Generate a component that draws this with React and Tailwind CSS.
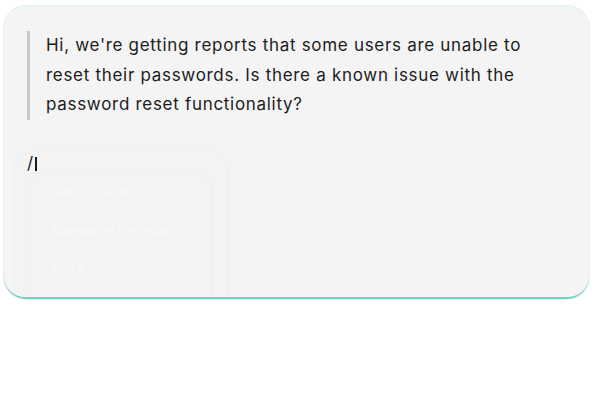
export default function App() {
  return (
    <div className="h-[411px] w-[600px] bg-white pl-[4px] pt-[6px]" style={{ fontFamily: 'Inter, "Noto Sans", sans-serif' }}>
      <section className="relative h-[293px] w-[585px] overflow-hidden rounded-[22px] border-b-2 border-[#7ccdc8] bg-[#f4f4f4] shadow-[0_0_0_1px_rgba(124,205,200,0.25)]">
        {/* Cita del ticket */}
        <div className="ml-[23px] mt-[25px] flex">
          <div className="w-[3px] shrink-0 bg-[#c9c9c9]" />
          <p className="w-[500px] pl-[16px] text-[17px] leading-[29.5px] tracking-[0.7px] text-[#1c1c1c]">
            Hi, we're getting reports that some users are unable to reset their passwords. Is there a known issue with the password reset functionality?
          </p>
        </div>

        {/* Comando slash */}
        <div className="relative z-10 ml-[23px] mt-[34px] flex h-[20px] items-center text-[17px] text-[#1c1c1c]">
          <span>/</span>
          <span className="ml-[2px] h-[14px] w-[2px] bg-[#1c1c1c]" />
        </div>

        {/* Menú fantasma */}
        <div className="absolute left-[11px] top-[143px] h-[170px] w-[212px] rounded-[22px] bg-[#f3f3f3] shadow-[0_0_6px_rgba(0,0,0,0.03)]">
          <div className="mx-[15px] mt-[26px] h-[150px] rounded-t-[10px] border-x border-t border-[#efefef] px-[20px] pt-[8px] text-[12px] text-white/50">
            <div className="h-[38px]">Ask AI to write</div>
            <div className="h-[38px]">Summarize the issue</div>
            <div>Add a note</div>
          </div>
        </div>
      </section>
    </div>
  )
}
